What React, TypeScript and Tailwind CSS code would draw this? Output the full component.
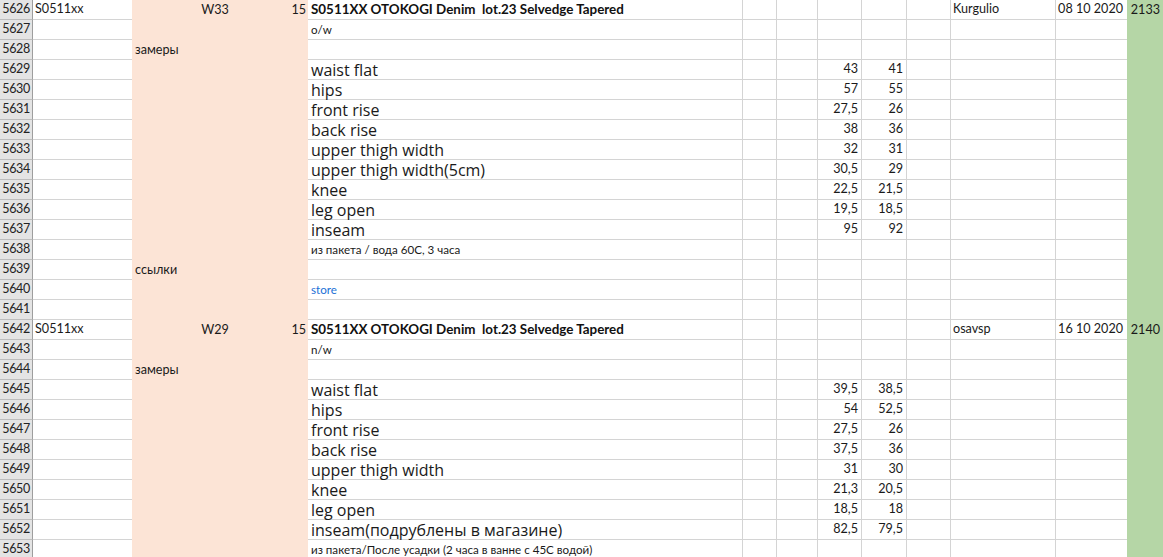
type Line = {
  n: number;
  a?: string;
  b?: string;
  c?: string;
  d?: string;
  e?: string;
  kind?: "title" | "note" | "label" | "link";
  h?: string;
  i?: string;
  k?: string;
  l?: string;
  m?: string;
};

const rows: Line[] = [
  { n: 5626, a: "S0511xx", c: "W33", d: "15", e: "S0511XX OTOKOGI Denim  lot.23 Selvedge Tapered", kind: "title", k: "Kurgulio", l: "08 10 2020", m: "2133" },
  { n: 5627, e: "o/w", kind: "note" },
  { n: 5628, b: "замеры" },
  { n: 5629, e: "waist flat", kind: "label", h: "43", i: "41" },
  { n: 5630, e: "hips", kind: "label", h: "57", i: "55" },
  { n: 5631, e: "front rise", kind: "label", h: "27,5", i: "26" },
  { n: 5632, e: "back rise", kind: "label", h: "38", i: "36" },
  { n: 5633, e: "upper thigh width", kind: "label", h: "32", i: "31" },
  { n: 5634, e: "upper thigh width(5cm)", kind: "label", h: "30,5", i: "29" },
  { n: 5635, e: "knee", kind: "label", h: "22,5", i: "21,5" },
  { n: 5636, e: "leg open", kind: "label", h: "19,5", i: "18,5" },
  { n: 5637, e: "inseam", kind: "label", h: "95", i: "92" },
  { n: 5638, e: "из пакета / вода 60С, 3 часа", kind: "note" },
  { n: 5639, b: "ссылки" },
  { n: 5640, e: "store", kind: "link" },
  { n: 5641 },
  { n: 5642, a: "S0511xx", c: "W29", d: "15", e: "S0511XX OTOKOGI Denim  lot.23 Selvedge Tapered", kind: "title", k: "osavsp", l: "16 10 2020", m: "2140" },
  { n: 5643, e: "n/w", kind: "note" },
  { n: 5644, b: "замеры" },
  { n: 5645, e: "waist flat", kind: "label", h: "39,5", i: "38,5" },
  { n: 5646, e: "hips", kind: "label", h: "54", i: "52,5" },
  { n: 5647, e: "front rise", kind: "label", h: "27,5", i: "26" },
  { n: 5648, e: "back rise", kind: "label", h: "37,5", i: "36" },
  { n: 5649, e: "upper thigh width", kind: "label", h: "31", i: "30" },
  { n: 5650, e: "knee", kind: "label", h: "21,3", i: "20,5" },
  { n: 5651, e: "leg open", kind: "label", h: "18,5", i: "18" },
  { n: 5652, e: "inseam(подрублены в магазине)", kind: "label", h: "82,5", i: "79,5" },
  { n: 5653, e: "из пакета/После усадки (2 часа в ванне с 45С водой)", kind: "note" },
];

const grid = "border-b border-r border-[#d4d4d4]";
const peach = "bg-[#fce4d6]";

// column E mixes a few text styles
function textFor(kind: Line["kind"]) {
  if (kind === "title") return "font-bold text-[13.4px] text-[#111]";
  if (kind === "label") return "font-['Open_Sans',sans-serif] text-[16px] text-[#1a1a1a]";
  if (kind === "link") return "text-[11.6px] text-[#1a6fd6]";
  return "text-[11.6px] text-[#1a1a1a]";
}

function SheetRow({ r }: { r: Line }) {
  return (
    <>
      <div className="flex items-center justify-end pr-[2px] bg-[#e4e4e4] border-b border-r border-b-[#bdbdbd] border-r-[#9e9e9e] text-[12.5px] tracking-[-0.3px] text-[#222]">
        {r.n}
      </div>
      <div className="flex items-center pl-[2px] border-b border-[#d4d4d4] whitespace-nowrap">{r.a}</div>
      <div className={`flex items-center pl-[3px] whitespace-nowrap ${peach}`}>{r.b}</div>
      <div className={`flex items-center justify-center whitespace-nowrap ${peach}`}>{r.c}</div>
      <div className={`flex items-center justify-end pr-[2px] ${peach}`}>{r.d}</div>
      <div className={`flex items-center pl-[3px] whitespace-pre ${grid} ${textFor(r.kind)}`}>{r.e}</div>
      <div className={grid} />
      <div className={grid} />
      <div className={`flex items-center justify-end pr-[3px] ${grid}`}>{r.h}</div>
      <div className={`flex items-center justify-end pr-[3px] ${grid}`}>{r.i}</div>
      <div className={grid} />
      <div className={`flex items-center pl-[2px] ${grid}`}>{r.k}</div>
      <div className="flex items-center justify-end pr-[4px] border-b border-[#d4d4d4] whitespace-nowrap">{r.l}</div>
      <div className="flex items-center justify-end pr-[3px] bg-[#b5d6a6]">{r.m}</div>
    </>
  );
}

export default function App() {
  return (
    <div className="w-[1163px] h-[557px] overflow-hidden bg-white font-['Lato','Open_Sans',sans-serif] text-[12.6px] text-[#1a1a1a]">
      <div className="grid grid-cols-[33px_99px_60px_46px_70px_435px_34px_41px_44px_45px_44px_105px_71px_36px] auto-rows-[20px] leading-none">
        {rows.map((r) => (
          <SheetRow key={r.n} r={r} />
        ))}
      </div>
    </div>
  );
}
